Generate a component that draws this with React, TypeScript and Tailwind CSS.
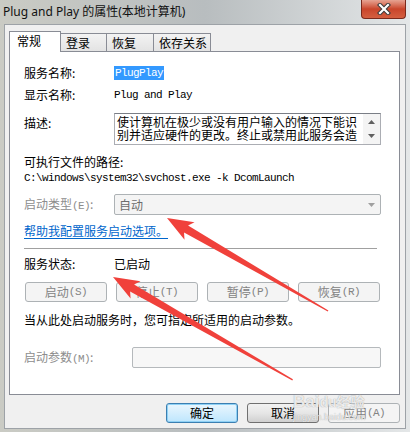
import React from "react";

function CloseButton() {
  return (
    <div className="mr-[4px] flex h-[19px] w-[45px] items-center justify-center rounded-b-[4px] border border-t-0 border-[#7a2a1c] bg-gradient-to-b from-[#e6a392] via-[#c9452b] to-[#d45f40]">
      <svg width="14" height="12" viewBox="0 0 14 12">
        <path d="M3 2 L11 10 M11 2 L3 10" stroke="#3b3b3b" strokeWidth="4.2" strokeLinecap="square" />
        <path d="M3 2 L11 10 M11 2 L3 10" stroke="#ffffff" strokeWidth="2.2" strokeLinecap="square" />
      </svg>
    </div>
  );
}

function Tab({ label, width }: { label: string; width: string }) {
  return (
    <div className={`h-[18px] ${width} -ml-px border border-b-0 border-[#898c95] bg-gradient-to-b from-[#f3f3f3] to-[#e3e3e3] pl-[5px] leading-[17px]`}>
      {label}
    </div>
  );
}

function DisabledButton({ label, hotkey }: { label: string; hotkey: string }) {
  return (
    <div className="flex h-[20px] w-[82px] items-center justify-center rounded-[3px] border border-[#adb2b5] bg-[#f4f4f4] text-[#838383]">
      {label}
      <span className="font-['Liberation_Mono',monospace] text-[11px] tracking-[-0.5px]">({hotkey})</span>
    </div>
  );
}

function Arrow({ x, y, angle, length }: { x: number; y: number; angle: number; length: number }) {
  const pts = [
    "0,0",
    "26,-10",
    "22,-4",
    `${length},-0.6`,
    `${length},0.6`,
    "22,4",
    "26,10",
  ].join(" ");
  return <polygon points={pts} fill="#f0413b" transform={`translate(${x} ${y}) rotate(${angle})`} />;
}

export default function App() {
  return (
    <div className="relative h-[432px] w-[410px] overflow-hidden bg-gradient-to-r from-[#cacbc4] via-[#b8bdbf] to-[#e4e7e8] font-['Noto_Sans_CJK_SC',sans-serif] text-[12px] text-black">
      {/* title bar */}
      <div className="flex h-[24px] items-start justify-between">
        <span className="pl-[3px] pt-[5px] font-['Noto_Sans','Noto_Sans_CJK_SC',sans-serif] leading-[14px] text-[#111]">
          Plug and Play 的属性(本地计算机)
        </span>
        <CloseButton />
      </div>

      {/* client area */}
      <div className="mx-[4px] h-[405px] border border-[#9da2a7] bg-[#f0f0f0]">
        {/* tabs */}
        <div className="flex h-[26px] items-end pl-[4px]">
          <div className="relative z-10 -mb-px h-[21px] w-[52px] border border-b-0 border-[#898c95] bg-white pl-[7px] leading-[18px]">
            常规
          </div>
          <Tab label="登录" width="w-[47px]" />
          <Tab label="恢复" width="w-[48px]" />
          <Tab label="依存关系" width="w-[58px]" />
        </div>

        {/* panel */}
        <div className="ml-[4px] flex h-[344px] w-[391px] flex-col border border-[#898c95] bg-white pl-[14px]">
          <div className="mt-[14px] flex h-[14px] items-center leading-[14px]">
            <span className="w-[90px]">服务名称:</span>
            <span className="bg-[#3399ff] px-px font-['Liberation_Mono',monospace] text-[11px] tracking-[-0.6px] text-white">PlugPlay</span>
          </div>
          <div className="mt-[8px] flex h-[14px] items-center leading-[14px]">
            <span className="w-[90px]">显示名称:</span>
            <span className="font-['Liberation_Mono',monospace] text-[11px] tracking-[-0.6px]">Plug and Play</span>
          </div>
          <div className="mt-[11px] flex h-[32px] items-start">
            <span className="w-[90px] pt-[3px] leading-[14px]">描述:</span>
            <div className="flex h-[32px] w-[267px] border border-[#abadb3] border-t-[#7a7e86] bg-white">
              <div className="flex-1 overflow-hidden whitespace-nowrap pl-[2px] pt-[1px] leading-[13px]">
                <div>使计算机在极少或没有用户输入的情况下能识</div>
                <div>别并适应硬件的更改。终止或禁用此服务会造</div>
              </div>
              <div className="flex w-[17px] flex-col items-center justify-between bg-[#f4f4f4] py-[6px]">
                <svg width="7" height="4" viewBox="0 0 7 4"><path d="M0 4 L3.5 0 L7 4 Z" fill="#606060" /></svg>
                <svg width="7" height="4" viewBox="0 0 7 4"><path d="M0 0 L3.5 4 L7 0 Z" fill="#606060" /></svg>
              </div>
            </div>
          </div>
          <div className="mt-[10px] h-[14px] leading-[14px]">可执行文件的路径:</div>
          <div className="mt-[2px] h-[14px] font-['Liberation_Mono',monospace] text-[11px] leading-[14px] tracking-[-0.6px]">
            C:\windows\system32\svchost.exe -k DcomLaunch
          </div>
          <div className="mt-[9px] flex h-[21px] items-center">
            <span className="w-[90px] text-[#8d8d8d]">
              启动类型<span className="font-['Liberation_Mono',monospace] text-[11px] tracking-[-0.6px]">(E)</span>:
            </span>
            <div className="flex h-[21px] w-[267px] items-center justify-between rounded-[2px] border border-[#adb2b5] bg-[#f4f4f4] pl-[4px] pr-[5px] text-[#6d6d6d]">
              <span>自动</span>
              <svg width="7" height="4" viewBox="0 0 7 4"><path d="M0 0 L3.5 4 L7 0 Z" fill="#a0a0a0" /></svg>
            </div>
          </div>
          <div className="mt-[9px] h-[14px] leading-[14px]">
            <span className="text-[#0066cc] underline underline-offset-2">帮助我配置服务启动选项。</span>
          </div>
          <div className="mt-[10px] h-px w-[353px] bg-[#a0a0a0]" />
          <div className="mt-[8px] flex h-[14px] items-center leading-[14px]">
            <span className="w-[90px]">服务状态:</span>
            <span>已启动</span>
          </div>
          <div className="ml-px mt-[11px] flex gap-[9px]">
            <DisabledButton label="启动" hotkey="S" />
            <DisabledButton label="停止" hotkey="T" />
            <DisabledButton label="暂停" hotkey="P" />
            <DisabledButton label="恢复" hotkey="R" />
          </div>
          <div className="mt-[11px] h-[14px] leading-[14px]">当从此处启动服务时，您可指定所适用的启动参数。</div>
          <div className="mt-[20px] flex h-[21px] items-center">
            <span className="w-[108px] text-[#8d8d8d]">
              启动参数<span className="font-['Liberation_Mono',monospace] text-[11px] tracking-[-0.6px]">(M)</span>:
            </span>
            <div className="h-[21px] w-[249px] rounded-[2px] border border-[#b5b9bc] bg-[#f7f7f7]" />
          </div>
        </div>

        {/* dialog buttons */}
        <div className="mt-[8px] flex justify-end gap-[9px] pr-[5px]">
          <div className="flex h-[20px] w-[72px] items-center justify-center rounded-[3px] border border-[#3c7fb1] bg-gradient-to-b from-[#eaf6fd] to-[#bee6fd] shadow-[inset_0_0_0_1px_#8fd1f5]">
            确定
          </div>
          <div className="flex h-[20px] w-[72px] items-center justify-center rounded-[3px] border border-[#707070] bg-gradient-to-b from-[#f2f2f2] via-[#e6e6e6] to-[#d0d0d0]">
            取消
          </div>
          <div className="flex h-[20px] w-[72px] items-center justify-center rounded-[3px] border border-[#adb2b5] bg-[#f4f4f4] text-[#838383]">
            应用<span className="font-['Liberation_Mono',monospace] text-[11px] tracking-[-0.6px]">(A)</span>
          </div>
        </div>
      </div>

      {/* watermark */}
      <div className="pointer-events-none absolute left-[293px] top-[393px] flex flex-col leading-none text-white/80 [text-shadow:0_0_1px_#8a8a8a]">
        <span className="font-['Liberation_Sans',sans-serif] text-[17px] font-bold">
          Bai<span className="text-[14px]">du</span>
          <span className="font-['Noto_Sans_CJK_SC',sans-serif] text-[14px]">经验</span>
        </span>
        <span className="mt-[3px] font-['Liberation_Sans',sans-serif] text-[9px]">jingyan.baidu.com</span>
      </div>

      {/* annotation arrows */}
      <svg className="pointer-events-none absolute left-0 top-0" width="410" height="432" viewBox="0 0 410 432">
        <Arrow x={167} y={218} angle={30} length={186} />
        <Arrow x={113} y={277} angle={29.8} length={207} />
      </svg>
    </div>
  );
}
